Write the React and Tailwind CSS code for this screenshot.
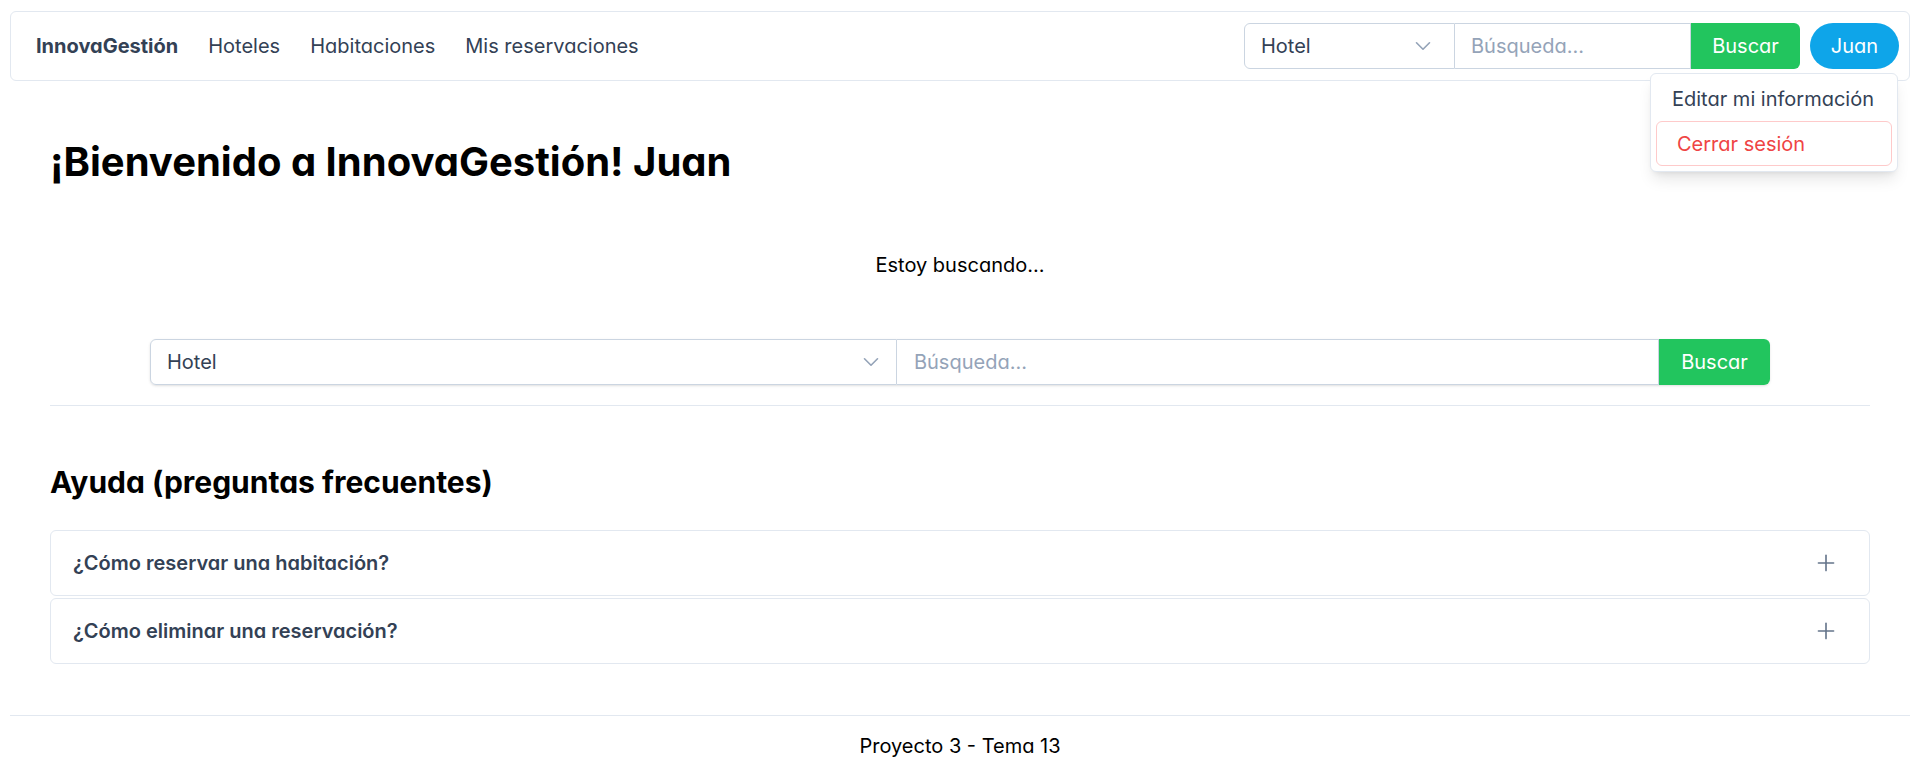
import { ChevronDown, Plus } from "lucide-react";

const SearchBar = ({ big }) => (
  <div className={`flex ${big ? "w-full shadow-sm rounded-md" : ""}`}>
    <div
      className={`flex items-center justify-between h-[46px] border border-[#cbd5e1] rounded-l-md bg-white text-[#334155] ${
        big ? "flex-[741] pl-4 pr-[12px]" : "w-[211px] pl-4 pr-[18px]"
      }`}
    >
      <span>Hotel</span>
      <ChevronDown size={26} strokeWidth={1.5} className="text-[#94a3b8]" />
    </div>
    <div
      className={`flex items-center h-[46px] border border-l-0 border-[#cbd5e1] bg-white text-[#94a3b8] ${
        big ? "flex-[769] pl-[17px]" : "w-[236px] pl-4"
      }`}
    >
      Búsqueda...
    </div>
    <button
      className={`h-[46px] bg-[#22c55e] text-white rounded-r-md ${
        big ? "w-[111px]" : "w-[109px]"
      }`}
    >
      Buscar
    </button>
  </div>
);

const faqs = ["¿Cómo reservar una habitación?", "¿Cómo eliminar una reservación?"];

const App = () => {
  return (
    <div
      className="min-h-screen bg-white text-[20px] px-[10px] pt-[11px] [font-feature-settings:'cv11'] text-black"
      style={{ fontFamily: "Inter, 'Noto Sans', sans-serif" }}
    >
      <nav className="relative flex items-center justify-between border border-[#e2e8f0] rounded-md pl-[25px] pr-[10px] py-[11px]">
        <div className="flex items-center gap-[30px] text-[#334155]">
          <span className="font-bold text-[20px]">InnovaGestión</span>
          <a>Hoteles</a>
          <a>Habitaciones</a>
          <a>Mis reservaciones</a>
        </div>
        <div className="flex items-center gap-[10px]">
          <SearchBar />
          <button className="h-[46px] w-[89px] rounded-full bg-[#0ea5e9] text-white">Juan</button>
        </div>
        <div className="absolute right-[11px] top-[61px] w-[248px] bg-white border border-[#e2e8f0] rounded-md shadow-lg p-[5px] z-10">
          <div className="px-[16px] pt-[5px] pb-[7px] text-[#334155]">Editar mi información</div>
          <div className="px-[20px] h-[45px] flex items-center border border-[#fecaca] rounded-md text-[#ef4444]">
            Cerrar sesión
          </div>
        </div>
      </nav>

      <main className="px-[40px]">
        <h1 className="mt-[57px] text-[40px] leading-[48px] font-bold">¡Bienvenido a InnovaGestión! Juan</h1>
        <p className="mt-[64px] text-center leading-[30px]">Estoy buscando...</p>
        <div className="mt-[59px] px-[100px]">
          <SearchBar big />
        </div>
        <hr className="mt-[20px] border-[#e2e8f0]" />
        <h2 className="mt-[58px] text-[30px] leading-[36px] font-bold">Ayuda (preguntas frecuentes)</h2>
        <div className="mt-[30px] flex flex-col gap-[2px]">
          {faqs.map((q) => (
            <div
              key={q}
              className="flex items-center justify-between h-[66px] border border-[#e2e8f0] rounded-md pl-[22px] pr-[30px]"
            >
              <span className="font-semibold text-[#334155]">{q}</span>
              <Plus size={26} strokeWidth={1.5} className="text-[#64748b]" />
            </div>
          ))}
        </div>
      </main>

      <footer className="mt-[51px] border-t border-[#e2e8f0] h-[61px] flex items-center justify-center">
        Proyecto 3 - Tema 13
      </footer>
    </div>
  );
};

export default App;
